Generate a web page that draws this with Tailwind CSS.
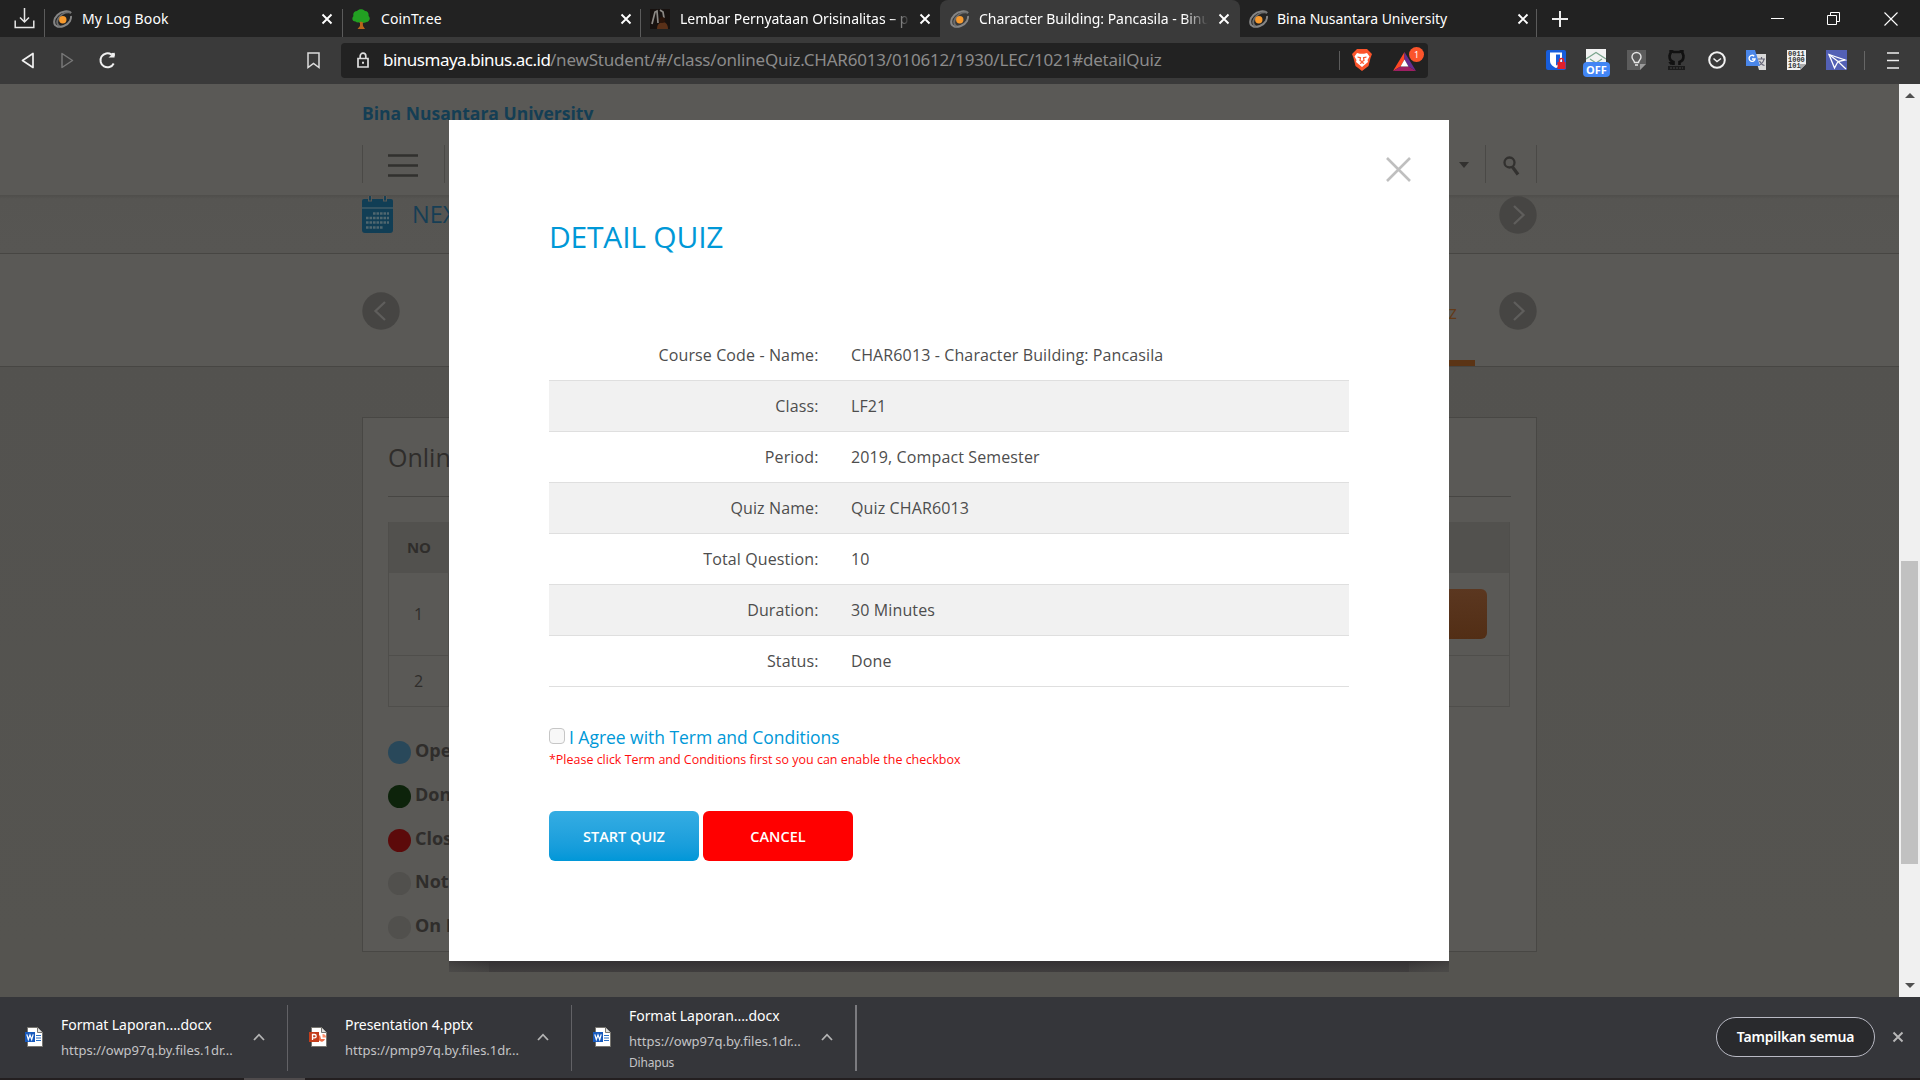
<!DOCTYPE html>
<html lang="id">
<head>
<meta charset="utf-8">
<title>Character Building: Pancasila - Bina Nusantara University</title>
<script src="https://cdn.jsdelivr.net/npm/@tailwindcss/browser@4"></script>
</head>
<body class="w-[1920px] h-[1080px] overflow-hidden flex flex-col bg-[#222222] font-['Open_Sans',sans-serif] text-white">

<svg class="hidden">
  <symbol id="binus" viewBox="0 0 20 20"><path d="M18.600 4C16 1.200 9 2 5 6c-4 4-4.500 9-1 11 4 2 11-.5 13.500-5 1-2 1.300-3.500 1-5" fill="none" stroke="#858585" stroke-width="2"/><path d="M18 3.500C13 3 8 5.500 5.800 9.500c-1.700 3-1.300 6 1.200 7.800" fill="none" stroke="#6d6d6d" stroke-width="1.800"/><circle cx="10.300" cy="10.700" r="3.700" fill="#f79a2e"/></symbol>
  <symbol id="x" viewBox="0 0 12 12"><path d="M1.500 1.500l9 9M10.500 1.500l-9 9" stroke="currentColor" stroke-width="1.900" fill="none"/></symbol>
  <symbol id="up" viewBox="0 0 12 8"><path d="M1 7l5-5.300L11 7" stroke="#b4b4b4" stroke-width="1.800" fill="none"/></symbol>
  <symbol id="word" viewBox="0 0 18 20"><path d="M2.500.500h10l5 5v14h-15z" fill="#fff" stroke="#77756f"/><path d="M12.500.500v5h5" fill="#e0e0e0" stroke="#77756f"/><path d="M11 8.500h5M11 11h5M11 13.500h5" stroke="#2a6fc4"/><path d="M0 5h10v10H0z" fill="#185abd"/><path d="M1.800 7.300l1.500 5.200L5 8l1.700 4.500 1.500-5.200" fill="none" stroke="#fff" stroke-width="1.200"/></symbol>
  <symbol id="ppt" viewBox="0 0 18 20"><path d="M2.500.500h10l5 5v14h-15z" fill="#fff" stroke="#77756f"/><path d="M12.500.500v5h5" fill="#e0e0e0" stroke="#77756f"/><path d="M11 8a3.500 3.500 0 1 0 5 4h-4z" fill="#ed6c47"/><path d="M13.500 7v3.500H17A3.500 3.500 0 0 0 13.500 7z" fill="#ff8f6b"/><path d="M0 5h10v10H0z" fill="#c43e1c"/><path d="M3.500 13V7.500h2a1.700 1.700 0 0 1 0 3.400h-2" fill="none" stroke="#fff" stroke-width="1.300"/></symbol>
  <symbol id="next" viewBox="0 0 38 38"><circle cx="19" cy="19" r="18.700" fill="#464543"/><path d="M15 10l9.500 9L15 28" fill="none" stroke="#5f5e5c" stroke-width="2.300"/></symbol>
</svg>

<!-- Tab strip -->
<div class="h-[37px] shrink-0 flex bg-[#222222] text-[14px] leading-[37px] font-['Noto_Sans',sans-serif]">
  <div class="w-[44px] flex items-center justify-end pr-[9px]"><svg class="w-[21px] h-[21px]" viewBox="0 0 21 21" fill="none" stroke="#e6e6e6" stroke-width="1.500"><path d="M10.500 0v14M6 9.500l4.500 4.500L15 9.500M1.200 12.500v7h18.600v-7"/></svg></div>
  <div class="w-[299px] flex items-center pl-[8px] pr-[10px] relative">
    <i class="absolute left-0 top-[9px] h-[28px] w-px bg-[#5b5b5b]"></i>
    <svg class="w-[21px] h-[20px]"><use href="#binus"/></svg><span class="ml-[9px] flex-1 tracking-[0.150px]">My Log Book</span><svg class="w-3 h-3"><use href="#x"/></svg>
  </div>
  <div class="w-[298px] flex items-center pl-[9px] pr-[9px] relative">
    <i class="absolute -left-px top-[9px] h-[28px] w-px bg-[#5b5b5b]"></i>
    <svg class="w-[18px] h-5" viewBox="0 0 18 20"><path d="M8 11h2.500l.500 6 2 3H5.500L8 17z" fill="#b8651b"/><path d="M9 14L6 11M10 14l3-3" stroke="#b8651b" stroke-width="1.500"/><path d="M5 2c2-2.500 6-2.500 8 0 3 0 4 3 3.500 5 2.500 2 1 6-2 6-2 1.500-4 .500-5.500-.500-1.500 1-4 1.500-5.500 0C0 12.500-.500 9 1.500 7 .500 4.500 2.500 2 5 2z" fill="#22a022"/></svg><span class="ml-[11px] flex-1 tracking-[0.100px]">CoinTr.ee</span><svg class="w-3 h-3"><use href="#x"/></svg>
  </div>
  <div class="w-[299px] flex items-center pl-[9px] pr-[9px] relative">
    <i class="absolute -left-px top-[9px] h-[28px] w-px bg-[#5b5b5b]"></i>
    <svg class="w-5 h-5" viewBox="0 0 20 20"><path d="M0 0h20v20H0z" fill="#17110f"/><path d="M2 15L5 3l2-1 1 12M10 1l3 2 1 6" fill="none" stroke="#8d8985" stroke-width="1.700"/><path d="M7 20c0-5 3-7 6-7s5 3 5 7z" fill="#5a3018"/><circle cx="12" cy="11" r="3" fill="#2a140a"/></svg><span class="ml-[10px] w-[230px] overflow-hidden whitespace-nowrap tracking-[-0.050px] [mask-image:linear-gradient(to_right,black_210px,transparent_230px)]">Lembar Pernyataan Orisinalitas – p</span><span class="flex-1"></span><svg class="w-3 h-3"><use href="#x"/></svg>
  </div>
  <div class="w-[300px] flex items-center pl-[9px] pr-[10px] bg-[#3a3a3a] rounded-t-lg">
    <svg class="w-[21px] h-[20px]"><use href="#binus"/></svg><span class="ml-[9px] w-[229px] overflow-hidden whitespace-nowrap tracking-[-0.050px] [mask-image:linear-gradient(to_right,black_205px,transparent_229px)]">Character Building: Pancasila - Binu</span><span class="flex-1"></span><svg class="w-3 h-3"><use href="#x"/></svg>
  </div>
  <div class="w-[297px] flex items-center pl-2 pr-[8px] relative">
    <i class="absolute right-0 top-[9px] h-[28px] w-px bg-[#5b5b5b]"></i>
    <svg class="w-[21px] h-[20px]"><use href="#binus"/></svg><span class="ml-2 flex-1 tracking-[-0.040px]">Bina Nusantara University</span><svg class="w-3 h-3"><use href="#x"/></svg>
  </div>
  <div class="flex-1 flex items-center pl-[15px] pr-[22px]">
    <svg class="w-4 h-4" viewBox="0 0 16 16" stroke="#eee" stroke-width="2"><path d="M8 0v16M0 8h16"/></svg>
    <span class="flex-1"></span>
    <svg class="w-[13px] h-[14px]" viewBox="0 0 13 14"><path d="M0 6.500h13" stroke="#fff"/></svg>
    <svg class="w-[13px] h-[13px] ml-[43px]" viewBox="0 0 13 13" fill="none" stroke="#fff"><path d="M.500 3.500h9v9h-9zM3.500 3.500v-3h9v9h-3"/></svg>
    <svg class="w-[14px] h-[14px] ml-[44px]" viewBox="0 0 14 14" stroke="#fff" stroke-width="1.100"><path d="M.500.500l13 13M13.500.500l-13 13"/></svg>
  </div>
</div>

<!-- Address bar -->
<div class="h-[47px] shrink-0 flex items-center bg-[#3a3a3a] pr-[21px] pb-px">
  <svg class="w-[13px] h-[17px] ml-[21px]" viewBox="0 0 13 17" fill="none" stroke="#f0f0f0" stroke-width="1.700"><path d="M12 1.500v14L1.500 8.500z" stroke-linejoin="round"/></svg>
  <svg class="w-[13px] h-[17px] ml-[27px]" viewBox="0 0 13 17" fill="none" stroke="#777" stroke-width="1.500"><path d="M1 1.500v14l10.500-7z" stroke-linejoin="round"/></svg>
  <svg class="w-[18px] h-[18px] ml-[24px]" viewBox="0 0 18 18"><path d="M15.700 12.500A7 7 0 1 1 13.500 3.600" fill="none" stroke="#f0f0f0" stroke-width="2"/><path d="M10.500 6.500h6V1.500z" fill="#f0f0f0"/><circle cx="15" cy="3.700" r="2" fill="#f0f0f0"/></svg>
  <span class="flex-none w-[191px]"></span>
  <svg class="w-[13px] h-[17px]" viewBox="0 0 13 17" fill="none" stroke="#ddd" stroke-width="1.500"><path d="M1 1h11v14.500L6.500 11.500 1 15.500z"/></svg>
  <div class="ml-[21px] w-[1087px] h-[35px] bg-[#222222] rounded flex items-center pl-[16px] pr-[3px] font-['Noto_Sans',sans-serif] text-[17px] whitespace-nowrap">
    <svg class="w-[12px] h-[16px]" viewBox="0 0 12 16" fill="none" stroke="#ddd" stroke-width="1.700"><path d="M1 6.500h10V15H1zM3.200 6.500V4a2.800 2.800 0 0 1 5.600 0v2.500"/><path d="M5 10.700h2" stroke-width="2"/></svg>
    <span class="ml-[14px] w-[167px] tracking-[-0.500px]">binusmaya.binus.ac.id</span><span class="text-[#8b8b8b] tracking-[-0.200px]">/newStudent/#/class/onlineQuiz.CHAR6013/010612/1930/LEC/1021#detailQuiz</span>
    <span class="flex-1"></span>
    <span class="w-px h-[19px] bg-[#5b5b5b]"></span>
    <svg class="ml-[12px] w-5 h-[22px]" viewBox="0 0 20 22"><path d="M5 0h10l2.500 2.500L20 5l-1.500 4-2 8L10 22 3.500 17l-2-8L0 5l2.500-2.500z" fill="#fb542b"/><path d="M5 4l3 .7h4L15 4l2.500 3.500-2 3.500.500 2-3 2.500L10 18l-3-2.500L4 13l.5-2-2-3.500z" fill="#fff"/><path d="M5.500 8l3 .8-.5 2.700 2 1 2-1-.5-2.700 3-.8M8 14.500l2-1 2 1" fill="none" stroke="#fb542b" stroke-width="1.200"/></svg>
    <span class="relative ml-[21px] w-[32px] h-[24px]"><svg class="absolute left-0 top-[4px] w-[23px] h-[19px]" viewBox="0 0 23 19"><path d="M11.500 0L0 19l7.500-4.500 4-7z" fill="#ff4724"/><path d="M11.500 0L23 19l-7.500-4.500-4-7z" fill="#662d91"/><path d="M0 19h23l-7.500-4.500h-8z" fill="#9e1f63"/><path d="M11.500 7.500l4 7h-8z" fill="#fff"/></svg><span class="absolute left-[16px] -top-px w-[15px] h-[15px] rounded-full bg-[#fb542b] text-[9px] leading-[15px] text-center">1</span></span>
  </div>
  <span class="flex-1"></span>
  <div class="flex items-center">
    <svg class="w-5 h-5" viewBox="0 0 20 20"><rect width="20" height="20" rx="2" fill="#175ddc"/><path d="M4 2.500h12v8c0 4-3 6-6 7.500-3-1.500-6-3.500-6-7.500z" fill="#fff"/><path d="M10 4.500h4v6c0 2.500-2 4-4 5z" fill="#175ddc"/><path d="M11.500 12h8v7h-8z" fill="#e0202a"/><path d="M13.500 12v-1.500a2 2 0 0 1 4 0V12" fill="none" stroke="#e0202a" stroke-width="1.500"/></svg>
    <span class="relative ml-5 w-5 h-[22px]"><svg class="w-5 h-5" viewBox="0 0 20 20"><path d="M0 0h20v20H0z" fill="#f2f2f2"/><path d="M0 10l10-6.500L20 10M4 10l6 4 6-4" fill="none" stroke="#7aa58d" stroke-width="1.200"/></svg><span class="absolute left-[-3px] top-[13px] w-[27px] h-[15px] rounded-sm bg-[#4285f4] text-[11px] font-bold leading-[15px] text-center">OFF</span></span>
    <svg class="ml-[21px] w-[19px] h-5" viewBox="0 0 19 20"><path d="M0 0h19v14l-6 6H0z" fill="#5c5c5c"/><path d="M13 20v-6h6z" fill="#9a9a9a"/><path d="M7.500 12.500c0-2-2.500-3-2.500-5.500a4.500 4.500 0 0 1 9 0c0 2.500-2.500 3.500-2.500 5.500zM8 15h3" fill="none" stroke="#e6e6e6" stroke-width="1.400"/></svg>
    <svg class="ml-[22px] w-[17px] h-5" viewBox="0 0 17 20"><path d="M5.500 15v-3C2.500 11 1.300 9 1.600 6c.100-1.500.600-2.400 1-2.900V.500L5.500 2h6l2.900-1.500v2.600c.4.500.9 1.400 1 2.900.3 3-.9 5-3.900 6v3M6 13.500H3l-1.500-2" fill="none" stroke="#111" stroke-width="2.600"/><path d="M0 16h17v4H0z" fill="#1b1b1b"/><path d="M2 18h13" stroke="#444" stroke-dasharray="2 1"/></svg>
    <svg class="ml-[23px] w-[18px] h-[18px]" viewBox="0 0 18 18" fill="none" stroke="#f2f2f2"><circle cx="9" cy="9" r="7.800" stroke-width="2"/><path d="M5.500 7.500L9 10.500l4-3" stroke-width="1.500"/></svg>
    <svg class="ml-[20px] w-[21px] h-[20px]" viewBox="0 0 21 20"><path d="M8 4h12v16h-7z" fill="#d8d8d8"/><path d="M12 9h7M15.500 7v2M18 9c-.5 3-2.500 5-4.500 6M13.500 11c1 2 3 4 5 4.500" stroke="#667" fill="none" stroke-width="1.200"/><path d="M0 0h9l5 16H0z" fill="#4a86e8"/><path d="M8.200 6.200A3 3 0 1 0 9 9H6" fill="none" stroke="#fff" stroke-width="1.400"/></svg>
    <span class="relative ml-5 w-[19px] h-5"><svg class="w-[19px] h-5" viewBox="0 0 19 20"><path d="M0 0h19v14l-6 6H0z" fill="#efefef"/><path d="M13 20v-6h6z" fill="#aaa"/></svg><span class="absolute left-px top-px text-[7px] leading-[6px] font-bold text-[#333] font-['Liberation_Mono',monospace] whitespace-pre">0011
1000
101</span></span>
    <svg class="ml-5 w-[21px] h-5" viewBox="0 0 21 20"><path d="M0 0h21v20H0z" fill="#5360b5"/><path d="M3 4.500l16 5.500-7 1.500L8.500 18z" fill="none" stroke="#fff" stroke-width="1.300"/><path d="M3 4.500l9 7 8 7.500" stroke="#fff" stroke-width="1.300"/></svg>
    <span class="ml-[17px] w-px h-[19px] bg-[#666]"></span>
    <svg class="ml-[22px] w-3 h-[17px]" viewBox="0 0 12 17" stroke="#eee" stroke-width="1.600"><path d="M0 1h12M0 8.500h12M0 16h12"/></svg>
  </div>
</div>

<!-- Viewport -->
<div class="h-[913px] shrink-0 flex relative overflow-hidden">
  <div class="w-[1899px] bg-[#555450] text-[#2f2d2b] flex flex-col">
    <header class="h-[111px] shrink-0 bg-[#5a5956] flex justify-center">
      <div class="w-[1175px] pt-[15px]">
        <div class="text-[17.500px] leading-[28px] font-bold text-[#143e54]">Bina Nusantara University</div>
        <div class="mt-[18px] h-[38px] flex justify-between">
          <div class="w-[83px] border-x border-[#4a4946] flex items-center justify-center pr-[2px] pt-[2px]"><svg class="w-[30px] h-[23px]" viewBox="0 0 30 23"><path d="M0 1.500h30M0 11.500h30M0 21.500h30" stroke="#31302e" stroke-width="2.600"/></svg></div>
          <div class="flex items-center">
            <svg class="w-[10px] h-[6px] mr-[16px] mt-[2px]" viewBox="0 0 10 6"><path d="M0 0h10L5 6z" fill="#32312f"/></svg>
            <div class="w-[52px] h-[38px] border-x border-[#4a4946] flex items-center justify-center"><svg class="w-[17px] h-[20px] mt-[3px] ml-px" viewBox="0 0 17 20" fill="none" stroke="#32312f"><circle cx="6.500" cy="6.500" r="5" stroke-width="2.300"/><path d="M9.500 11l5.500 7.500" stroke-width="3.200"/></svg></div>
          </div>
        </div>
      </div>
    </header>
    <div class="h-[59px] shrink-0 border-b border-[#474643] bg-linear-to-b from-[#4f4e4b] from-0% via-[#565552] via-[4px] to-[#575653] flex justify-center">
      <div class="w-[1175px] flex items-start">
        <svg class="w-[31px] h-[37px] mt-px" viewBox="0 0 31 37"><path d="M2 3h27a2 2 0 0 1 2 2v29a3 3 0 0 1-3 3H3a3 3 0 0 1-3-3V5a2 2 0 0 1 2-2z" fill="#113e55"/><path d="M0 12h31" stroke="#5a6a70"/><path d="M8 0v5.500M23 0v5.500" stroke="#5a5956" stroke-width="4"/><path d="M8 0v4.500M23 0v4.500" stroke="#113e55" stroke-width="1.800"/><path d="M11 17.500h16M4 22h23M4 26.500h23M4 31.500h17" stroke="#50676f" stroke-width="2.300" stroke-dasharray="2.600 .900"/></svg>
        <span class="ml-[19px] mt-[1px] text-[23.500px] leading-[36px] font-normal text-[#163e55]">NEXT</span>
        <span class="flex-1"></span>
        <svg class="w-[38px] h-[38px] mt-px"><use href="#next"/></svg>
      </div>
    </div>
    <div class="h-[113px] shrink-0 border-b border-[#474643] bg-[#5a5956] flex justify-center">
      <div class="w-[1175px] flex items-start justify-between">
        <svg class="w-[38px] h-[38px] mt-[38px] rotate-180"><use href="#next"/></svg>
        <div class="flex"><div class="h-[112px] px-[18px] pt-[45px] border-b-[6px] border-[#5b3415] text-[18px] leading-[27px] text-[#633a18] mr-[24px]">Online Quiz</div>
        <svg class="w-[38px] h-[38px] mt-[38px]"><use href="#next"/></svg></div>
      </div>
    </div>
    <div class="flex justify-center bg-linear-to-b from-[#53524f] to-[#555450] pt-[50px]">
      <div class="w-[1175px] h-[535px] border border-[#484744] bg-[#5a5956] px-[25px] pt-[21px]">
        <h2 class="text-[25px] leading-[36px] font-normal">Online Quiz</h2>
        <div class="mt-[21px] border-t border-[#474643]"></div>
        <div class="mt-[25px] w-[1122px] border border-t-0 border-[#4f4e4b] text-[16px]">
          <div class="h-[51px] bg-[#52514e] flex items-center text-[15px] font-bold"><span class="w-[60px] text-center">NO</span></div>
          <div class="h-[82px] flex items-center justify-between pr-[22px]"><span class="w-[60px] h-full flex items-center justify-center border-r border-[#4f4e4b]">1</span><span class="w-[150px] h-[50px] rounded-md bg-linear-to-b from-[#5b3720] to-[#522e15]"></span></div>
          <div class="h-[51px] flex items-center border-t border-[#4f4e4b]"><span class="w-[60px] h-full flex items-center justify-center border-r border-[#4f4e4b]">2</span></div>
        </div>
        <ul class="mt-[27px] text-[18px] font-bold">
          <li class="h-[43.750px] flex gap-[4px] leading-[32px]"><i class="w-[23px] h-[23px] mt-[7px] rounded-full bg-[#29485a]"></i>Open</li>
          <li class="h-[43.750px] flex gap-[4px] leading-[32px]"><i class="w-[23px] h-[23px] mt-[7px] rounded-full bg-[#0d230b]"></i>Done</li>
          <li class="h-[43.750px] flex gap-[4px] leading-[32px]"><i class="w-[23px] h-[23px] mt-[7px] rounded-full bg-[#5c0a0a]"></i>Closed</li>
          <li class="h-[43.750px] flex gap-[4px] leading-[32px]"><i class="w-[23px] h-[23px] mt-[7px] rounded-full bg-[#51504d]"></i>Not Open</li>
          <li class="h-[43.750px] flex gap-[4px] leading-[32px]"><i class="w-[23px] h-[23px] mt-[7px] rounded-full bg-[#51504d]"></i>On Progress</li>
        </ul>
      </div>
    </div>
  </div>
  <!-- Scrollbar -->
  <div class="w-[21px] bg-[#f0f0f0] flex flex-col items-center">
    <svg class="w-[10px] h-[5px] mt-[9px]" viewBox="0 0 10 5"><path d="M5 0l5 5H0z" fill="#505050"/></svg>
    <div class="mt-[463px] w-[17px] h-[303px] bg-[#c1c1c1]"></div>
    <svg class="w-[10px] h-[5px] mt-[119px]" viewBox="0 0 10 5"><path d="M5 5l5-5H0z" fill="#505050"/></svg>
  </div>

  <!-- Quiz dialog -->
  <div class="absolute left-[449px] top-[36px] w-[1000px] h-[852px] flex flex-col">
    <div class="h-[841px] bg-white px-[100px] text-[#4d4d4d]">
      <div class="h-[62px] pt-[37px] flex justify-end mr-[-62px]"><svg class="w-[25px] h-[25px]" viewBox="0 0 25 25"><path d="M1 1l23 23M24 1L1 24" stroke="#bfbfbf" stroke-width="2.600"/></svg></div>
      <h1 class="mt-[33px] h-[44px] text-[30px] leading-[44px] font-normal tracking-[-0.200px] text-[#0098d7]">DETAIL QUIZ</h1>
      <div class="mt-[71px] text-[16px] leading-[50px] tracking-[0.120px]">
        <div class="h-[51px] border-b border-[#dfdfdf] grid grid-cols-[269.500px_1fr] gap-[32.500px]"><span class="text-right">Course Code - Name:</span><span>CHAR6013 - Character Building: Pancasila</span></div>
        <div class="h-[51px] border-b border-[#dfdfdf] bg-[#f1f1f1] grid grid-cols-[269.500px_1fr] gap-[32.500px]"><span class="text-right">Class:</span><span>LF21</span></div>
        <div class="h-[51px] border-b border-[#dfdfdf] grid grid-cols-[269.500px_1fr] gap-[32.500px]"><span class="text-right">Period:</span><span>2019, Compact Semester</span></div>
        <div class="h-[51px] border-b border-[#dfdfdf] bg-[#f1f1f1] grid grid-cols-[269.500px_1fr] gap-[32.500px]"><span class="text-right">Quiz Name:</span><span>Quiz CHAR6013</span></div>
        <div class="h-[51px] border-b border-[#dfdfdf] grid grid-cols-[269.500px_1fr] gap-[32.500px]"><span class="text-right">Total Question:</span><span>10</span></div>
        <div class="h-[51px] border-b border-[#dfdfdf] bg-[#f1f1f1] grid grid-cols-[269.500px_1fr] gap-[32.500px]"><span class="text-right">Duration:</span><span>30 Minutes</span></div>
        <div class="h-[51px] border-b border-[#dfdfdf] grid grid-cols-[269.500px_1fr] gap-[32.500px]"><span class="text-right">Status:</span><span>Done</span></div>
      </div>
      <div class="mt-[36px] flex items-start text-[17.500px] leading-[28px] tracking-[-0.030px] text-[#0098d7]"><span class="mt-[5px] mr-1 w-[16px] h-[16px] rounded-sm border border-[#c6c6c6] bg-[#f8f8f8]"></span>I Agree with Term and Conditions</div>
      <div class="text-[12.480px] leading-[18px] text-[#ff0d0d]">*Please click Term and Conditions first so you can enable the checkbox</div>
      <div class="mt-[42px] flex gap-1 text-[14.500px] font-semibold leading-[51px] text-white text-center">
        <div class="w-[150px] h-[50px] rounded-md bg-linear-to-b from-[#34ade3] to-[#0097d8]">START QUIZ</div>
        <div class="w-[150px] h-[50px] rounded-md bg-[#ff0000]">CANCEL</div>
      </div>
    </div>
    <div class="h-[11px] bg-linear-to-b from-[#343133] to-[#403e3e] flex justify-between">
      <div class="w-10 h-full bg-linear-to-tr from-[#4b4a48] to-transparent"></div>
      <div class="w-10 h-full bg-linear-to-tl from-[#4b4a48] to-transparent"></div>
    </div>
  </div>
</div>

<!-- Download shelf -->
<div class="h-[81px] shrink-0 bg-[#35363a] flex font-['Noto_Sans',sans-serif] text-[14px] whitespace-nowrap">
  <div class="w-[288px] flex items-center pl-[25px] pr-[23px]">
    <svg class="w-[18px] h-5 -mt-px"><use href="#word"/></svg>
    <div class="ml-[18px] flex-1"><div class="leading-[25px] tracking-[-0.050px]">Format Laporan....docx</div><div class="text-[13px] leading-[26px] text-[#c4c4c6]">https://owp97q.by.files.1dr...</div></div>
    <svg class="w-3 h-2 -mt-[2px]"><use href="#up"/></svg>
  </div>
  <div class="w-px h-[66px] mt-2 -ml-px bg-[#626266]"></div>
  <div class="w-[284px] flex items-center pl-[21px] pr-[23px]">
    <svg class="w-[18px] h-5 -mt-px"><use href="#ppt"/></svg>
    <div class="ml-[18px] flex-1"><div class="leading-[25px] tracking-[-0.050px]">Presentation 4.pptx</div><div class="text-[13px] leading-[26px] text-[#c4c4c6]">https://pmp97q.by.files.1dr...</div></div>
    <svg class="w-3 h-2 -mt-[2px]"><use href="#up"/></svg>
  </div>
  <div class="w-px h-[66px] mt-2 -ml-px bg-[#626266]"></div>
  <div class="w-[284px] flex items-center pl-[21px] pr-[23px]">
    <svg class="w-[18px] h-5 -mt-px"><use href="#word"/></svg>
    <div class="ml-[18px] flex-1"><div class="leading-[26px] tracking-[-0.050px]">Format Laporan....docx</div><div class="text-[13px] leading-[24px] text-[#c4c4c6]">https://owp97q.by.files.1dr...</div><div class="text-[12px] leading-[19px] tracking-[-0.200px] text-[#c4c4c6]">Dihapus</div></div>
    <svg class="w-3 h-2 -mt-[2px]"><use href="#up"/></svg>
  </div>
  <div class="w-[2px] h-[66px] mt-2 -ml-px bg-[#7b7b7f]"></div>
  <div class="flex-1 flex items-center justify-end pr-[16px] pb-px">
    <span class="w-[159px] h-[40px] rounded-full border border-[#b9bac4] bg-[#292a2d] text-center leading-[37px] font-semibold tracking-[-0.150px]">Tampilkan semua</span>
    <svg class="ml-[17px] w-3 h-3 text-[#b8b8b8]"><use href="#x"/></svg>
  </div>
</div>
<div class="h-[2px] shrink-0 bg-[#231f20] pl-[244px]"><div class="w-[61px] h-[2px] bg-[#4f4b4c]"></div></div>

</body>
</html>
